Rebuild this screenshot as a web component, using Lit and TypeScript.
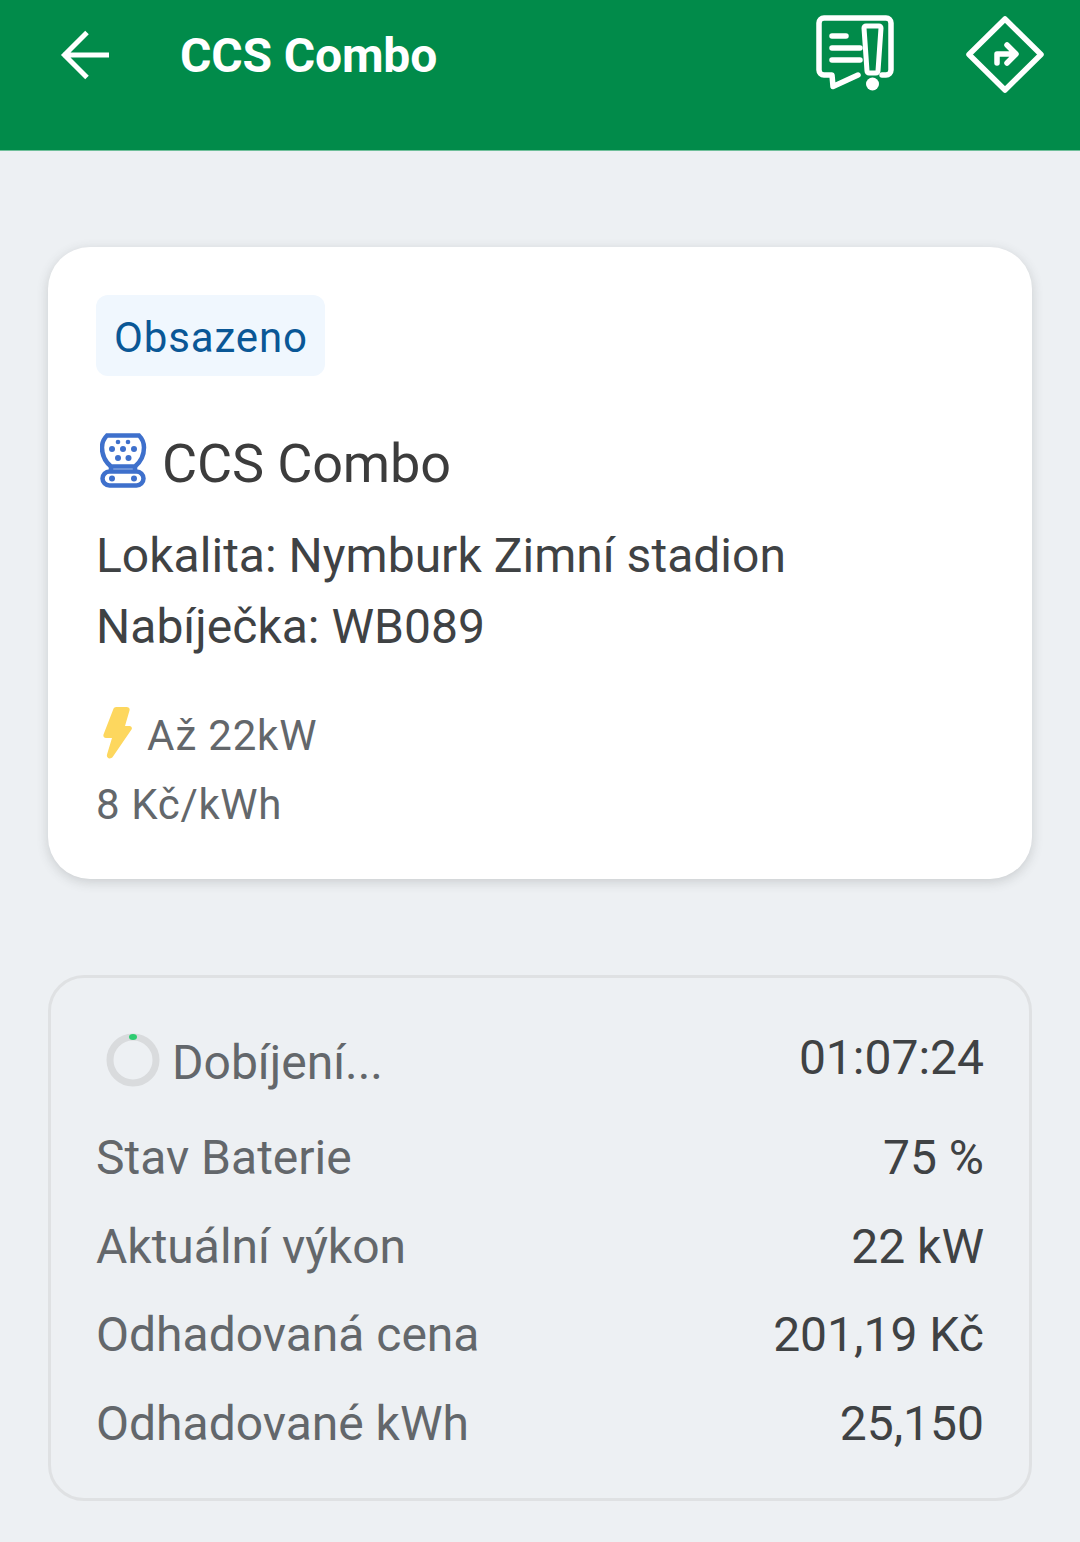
import { LitElement, html, css } from "lit";
import { customElement } from "lit/decorators.js";

@customElement("app-root")
export class AppRoot extends LitElement {
  static styles = css`
    :host { display: block; width: 1080px; height: 1542px; overflow: hidden; background: #edf0f3; font-family: Roboto, "Liberation Sans", sans-serif; }
    svg { display: block; flex: none; }
    .bar { height: 151px; box-sizing: border-box; background: #018b4a; border-bottom: 1px solid #6fbf9a; display: flex; align-items: flex-start; padding: 15px 35px 0 60px; color: #fff; }
    .back { margin-top: 15px; }
    .bar h1 { margin: 14px 0 0 70px; font-size: 48px; line-height: 54px; font-weight: 700; flex: 1; letter-spacing: -0.15px; }
    .report { margin-right: 70px; }
    .main { padding: 96px 48px 0; display: flex; flex-direction: column; gap: 96px; }
    .card { background: #fff; border-radius: 42px; height: 632px; box-sizing: border-box; padding: 48px; box-shadow: 0 3px 12px rgba(60,64,67,.2); }
    .badge { display: inline-block; background: #f0f7fe; color: #0a5796; border-radius: 12px; height: 81px; line-height: 86px; padding: 0 17px 0 18px; font-size: 42px; letter-spacing: 0.85px; box-sizing: border-box; }
    .title { display: flex; align-items: center; gap: 15px; margin: 51px 0 0 4px; color: #3c3c3c; font-size: 54px; line-height: 74px; letter-spacing: -0.15px; }
    .title svg { margin-bottom: 8px; }
    .info { margin-top: 19px; color: #3f4244; font-size: 48px; line-height: 71px; letter-spacing: 0.02px; }
    .power { display: flex; align-items: center; gap: 15px; margin: 47px 0 0 7px; height: 52px; color: #63676b; font-size: 42px; letter-spacing: 0.8px; }
    .power svg { margin-bottom: 4px; }
    .price { margin-top: 18px; color: #63676b; font-size: 42px; line-height: 52px; letter-spacing: 0.65px; }
    .panel { border: 3px solid #dfe1e3; border-radius: 36px; height: 526px; box-sizing: border-box; padding: 45px 45px 0; color: #63676b; font-size: 48px; }
    .row { display: flex; justify-content: space-between; height: 88.7px; align-items: center; }
    .row b { font-weight: 400; color: #3f4244; }
    .top { height: 90px; align-items: flex-start; }
    .lead { display: flex; align-items: center; gap: 12px; padding-left: 10px; margin-top: 10px; }
    .lead svg { margin-bottom: 4px; }
    .top b { line-height: 56px; margin-top: 7px; }
  `;
  render() {
    return html`
      <header class="bar">
        <svg class="back" width="50" height="50" viewBox="0 0 50 50" fill="none" stroke="#fff" stroke-width="5"><path d="M3 25H49M27 2.500 4.500 25 27 47.500"/></svg>
        <h1>CCS Combo</h1>
        <svg class="report" width="80" height="80" viewBox="0 0 80 80" fill="none" stroke="#fff" stroke-width="5.500" stroke-linecap="round" stroke-linejoin="round">
          <path d="M43 60 18 71.500 17 60H9a5 5 0 0 1-5-5V8a5 5 0 0 1 5-5h62a5 5 0 0 1 5 5v47a5 5 0 0 1-5 5h-4"/>
          <path d="M17 21h14M17 33h28M17 45h28"/>
          <path stroke-width="5" d="M51 11h13a2 2 0 0 1 2 2l-3 43a2 2 0 0 1-2 2h-7a2 2 0 0 1-2-2l-3-43a2 2 0 0 1 2-2z"/>
          <circle cx="57.500" cy="69" r="6.500" fill="#fff" stroke="none"/>
        </svg>
        <svg width="80" height="80" viewBox="0 0 80 80" fill="none" stroke="#fff" stroke-width="5.500" stroke-linecap="round" stroke-linejoin="round">
          <path d="M40 4 76 39.500 40 75 4 39.500Z" />
          <path d="M32 48V39h18M42 30l9 9-9 9"/>
        </svg>
      </header>
      <main class="main">
        <section class="card">
          <span class="badge">Obsazeno</span>
          <div class="title">
            <svg width="47" height="55" viewBox="0 0 47 55" fill="none" stroke="#3e70cc" stroke-width="4.500">
              <path d="M7 2.500h32c3 3 5 7 5 12 0 8-3 14-9 19H11c-6-5-9-11-9-19 0-5 2-9 5-12z"/>
              <path d="M11 34v4M35 34v4" />
              <rect x="2.500" y="38.500" width="41" height="14" rx="7"/>
              <g fill="#3e70cc" stroke="none">
                <circle cx="18" cy="9" r="2.300"/><circle cx="28" cy="9" r="2.300"/>
                <circle cx="12" cy="16" r="3"/><circle cx="23" cy="16" r="3"/><circle cx="34" cy="16" r="3"/>
                <circle cx="18" cy="25" r="3"/><circle cx="28.500" cy="25" r="3"/>
                <circle cx="12" cy="45.500" r="3"/><circle cx="34" cy="45.500" r="3"/>
              </g>
            </svg>
            <span>CCS Combo</span>
          </div>
          <div class="info">
            <div>Lokalita: Nymburk Zimní stadion</div>
            <div>Nabíječka: WB089</div>
          </div>
          <div class="power">
            <svg width="29" height="52" viewBox="0 0 29 52" fill="#fdd75e"><path d="M10 3c.5-2 1.500-3 3.500-3h10c2.500 0 3.500 1.500 3 3.500L22 19h4.500c2 0 3 2 2 3.500L10 49.500c-2.500 3.500-7 2-6-2L9 31H3c-2 0-3-1.500-2.500-3.500z"/></svg>
            <span>Až 22kW</span>
          </div>
          <div class="price">8 Kč/kWh</div>
        </section>
        <section class="panel">
          <div class="row top">
            <span class="lead">
              <svg width="54" height="54" viewBox="0 0 54 54" fill="none"><circle cx="27" cy="27" r="23" stroke="#d9dbdd" stroke-width="7"/><ellipse cx="27" cy="4" rx="4" ry="3" fill="#2ecc71"/></svg>
              <span>Dobíjení...</span>
            </span>
            <b>01:07:24</b>
          </div>
          <div class="row"><span>Stav Baterie</span><b>75 %</b></div>
          <div class="row"><span>Aktuální výkon</span><b>22 kW</b></div>
          <div class="row"><span>Odhadovaná cena</span><b>201,19 Kč</b></div>
          <div class="row"><span>Odhadované kWh</span><b>25,150</b></div>
        </section>
      </main>
    `;
  }
}
